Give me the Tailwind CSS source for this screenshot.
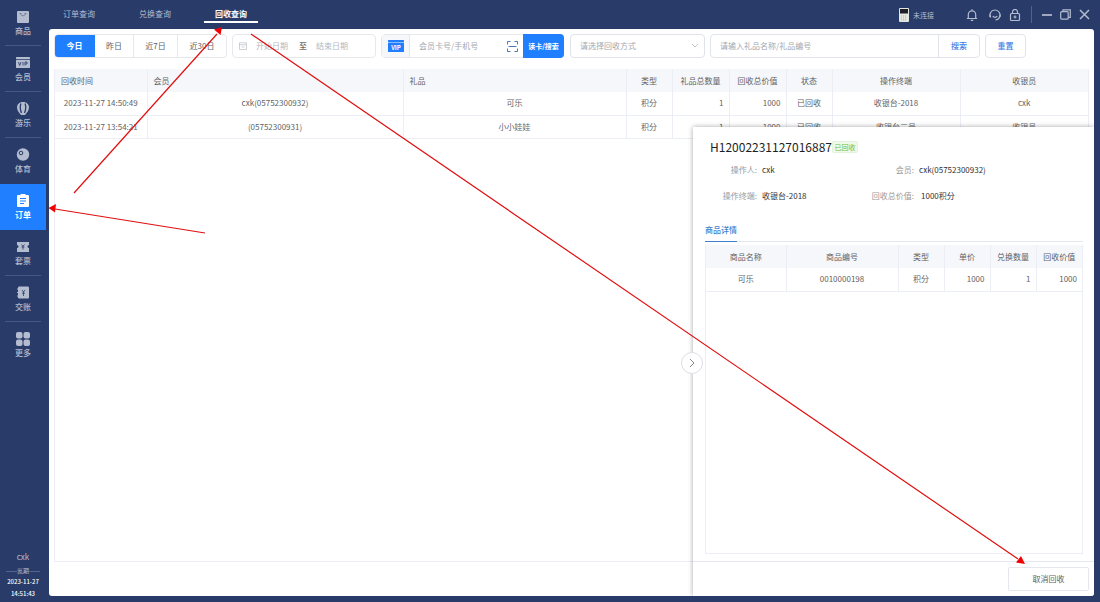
<!DOCTYPE html>
<html lang="zh-CN">
<head>
<meta charset="utf-8">
<meta name="viewport" content="width=device-width, initial-scale=1">
<title>回收查询</title>
<script src="https://cdn.jsdelivr.net/npm/@tailwindcss/browser@4"></script>
</head>
<body class="relative flex h-screen overflow-hidden bg-[#293b68] font-['Noto_Sans_CJK_SC',sans-serif] text-[8px] leading-3 text-[#606266]">

<nav class="flex w-[46px] shrink-0 flex-col text-[#b4bcd0]">
  <a href="#" class="flex h-[46px] flex-col items-center justify-end px-[5px]">
    <svg class="h-[13px] w-[14px]" viewBox="0 0 14 13" fill="currentColor"><rect x="1" y="1" width="12" height="12" rx="1"/><path d="M3.500 3.500h2M8.500 3.500h2M4.500 3.500c0 3 5 3 5 0" stroke="#6b789b" stroke-width=".9" fill="none"/></svg>
    <span class="mt-0.5 font-medium">商品</span><span class="mt-2 h-px w-full bg-[#465782]"></span>
  </a>
  <a href="#" class="flex h-[46px] flex-col items-center justify-end px-[5px]">
    <svg class="h-[13px] w-[14px]" viewBox="0 0 14 13" fill="currentColor"><rect x="0" y="1" width="14" height="2" rx=".5"/><rect x="0" y="3.700" width="14" height="8.300" rx=".5"/><path d="M2.500 6l1.200 3.500L5 6M7 6v3.500M9 9.500V6h2v2H9" stroke="#293b68" stroke-width=".8" fill="none"/></svg>
    <span class="mt-0.5 font-medium">会员</span><span class="mt-2 h-px w-full bg-[#465782]"></span>
  </a>
  <a href="#" class="flex h-[46px] flex-col items-center justify-end px-[5px]">
    <svg class="h-[13px] w-[14px]" viewBox="0 0 14 13" fill="currentColor"><path d="M7 0c4 0 6 2.500 6 5.500C13 8.500 10.500 11 9 13H5C3.500 11 1 8.500 1 5.500 1 2.500 3 0 7 0z"/><path d="M5 1.500C4 4 4.200 8 5.500 11M9 1.500C10 4 9.800 8 8.500 11" stroke="#293b68" stroke-width="1.300" fill="none"/></svg>
    <span class="mt-0.5 font-medium">游乐</span><span class="mt-2 h-px w-full bg-[#465782]"></span>
  </a>
  <a href="#" class="flex h-[46px] flex-col items-center justify-end px-[5px]">
    <svg class="h-[13px] w-[14px]" viewBox="0 0 14 13" fill="currentColor"><circle cx="7" cy="6.500" r="6.200"/><circle cx="5" cy="5" r="1.800" fill="none" stroke="#293b68"/></svg>
    <span class="mt-0.5 font-medium">体育</span><span class="mt-2 h-px w-full"></span>
  </a>
  <a href="#" aria-current="page" class="flex h-[46px] flex-col items-center justify-end bg-[#207fff] px-[5px] text-white">
    <svg class="h-[13px] w-[14px]" viewBox="0 0 14 13" fill="currentColor"><path d="M2 1h2.500V0h5v1H12a1 1 0 0 1 1 1v10a1 1 0 0 1-1 1H2a1 1 0 0 1-1-1V2a1 1 0 0 1 1-1z"/><path d="M4 4.500h6M4 7h6M4 9.500h4" stroke="#207fff" fill="none"/></svg>
    <span class="mt-0.5 font-bold">订单</span><span class="mt-2 h-px w-full"></span>
  </a>
  <a href="#" class="flex h-[46px] flex-col items-center justify-end px-[5px]">
    <svg class="h-[13px] w-[14px]" viewBox="0 0 14 13" fill="currentColor"><path d="M1 2h12v3a1.500 1.500 0 0 0 0 3v4H1V8a1.500 1.500 0 0 0 0-3z"/><path d="M5.500 4.500L7 6.300l1.500-1.800M7 6v3.500M5.500 7h3" stroke="#293b68" stroke-width=".8" fill="none"/></svg>
    <span class="mt-0.5 font-medium">套票</span><span class="mt-2 h-px w-full bg-[#465782]"></span>
  </a>
  <a href="#" class="flex h-[46px] flex-col items-center justify-end px-[5px]">
    <svg class="h-[13px] w-[14px]" viewBox="0 0 14 13" fill="currentColor"><rect x="2" y="0.500" width="11" height="12" rx="1.200"/><path d="M1 3h2M1 6.500h2M1 10h2" stroke="currentColor"/><path d="M6 4l1.500 2L9 4M7.500 6v4M6 7.200h3" stroke="#293b68" stroke-width=".8" fill="none"/></svg>
    <span class="mt-0.5 font-medium">交账</span><span class="mt-2 h-px w-full bg-[#465782]"></span>
  </a>
  <a href="#" class="flex h-[46px] flex-col items-center justify-end px-[5px]">
    <svg class="h-[14px] w-[14px]" viewBox="0 0 14 14" fill="currentColor"><rect width="6.500" height="6.500" rx="2"/><rect x="7.500" width="6.500" height="6.500" rx="2"/><rect y="7.500" width="6.500" height="6.500" rx="2"/><rect x="7.500" y="7.500" width="6.500" height="6.500" rx="2"/></svg>
    <span class="mt-px font-medium">更多</span><span class="mt-2 h-px w-full"></span>
  </a>
  <div class="mt-auto flex flex-col items-center pb-[2px]">
    <span>cxk</span>
    <div class="mt-[3px] flex w-full items-center px-[6px] text-[6px] leading-[10px]"><span class="h-px flex-1 bg-[#53638c]"></span><span>氪期</span><span class="h-px flex-1 bg-[#53638c]"></span></div>
    <time class="text-center text-[6px] leading-3 font-medium text-white">2023-11-27<br>14:51:43</time>
  </div>
</nav>

<div class="flex min-w-0 flex-1 flex-col pr-[6px] pb-[6px] pl-[3px]">
  <header class="flex h-[29px] shrink-0 items-center text-[#b4bcd0]">
    <div class="flex h-full pl-[14px]">
      <a href="#" class="mr-11 pt-2">订单查询</a>
      <a href="#" class="mr-[33px] pt-2">兑换查询</a>
      <a href="#" class="flex w-[54px] flex-col items-center pt-2 font-bold text-white">回收查询<span class="mt-px h-0.5 w-full bg-white"></span></a>
    </div>
    <div class="ml-auto flex items-center pr-1">
      <svg class="h-[14px] w-[10px]" viewBox="0 0 10 14"><rect width="10" height="14" rx="1" fill="#e4e6e0"/><rect x="1" y="1" width="8" height="4.500" fill="#1c1f26"/><path d="M2 8h6M2 10h6M2 12h6" stroke="#b5b7b2" stroke-dasharray="1 1"/></svg>
      <span class="mr-[32px] ml-1 text-[7px]">未连接</span>
      <button aria-label="通知" class="mr-[11px]"><svg class="size-3" viewBox="0 0 12 12" fill="none" stroke="currentColor" stroke-width="1.200"><path d="M.8 9.500h10.400M2.300 9.500V5.500a3.700 3.700 0 0 1 7.400 0v4M4.800 11.300h2.400M6 .3v1.500"/></svg></button>
      <button aria-label="客服" class="mr-2"><svg class="size-3" viewBox="0 0 12 12" fill="none" stroke="currentColor" stroke-width="1.200"><path d="M1.700 8.500A5 5 0 1 1 10.500 8.200C9.700 10 8.500 10.800 6.500 10.800M3.800 7c1 1.700 3.400 1.700 4.400 0"/><path d="M1 5.500v2.500M11 5.500v2.500"/></svg></button>
      <button aria-label="锁定" class="mr-[10px]"><svg class="size-3" viewBox="0 0 12 12" fill="none" stroke="currentColor" stroke-width="1.200"><rect x="1.500" y="4.500" width="9" height="7" rx="1"/><path d="M3.500 4.500V3a2.500 2.500 0 0 1 5 0v1.500M6 6.500v3M4.500 8h3"/></svg></button>
      <span class="mr-[10px] h-[17px] w-px bg-[#53638c]"></span>
      <button aria-label="最小化" class="mr-2"><svg class="h-3 w-[10px]" viewBox="0 0 10 12"><path d="M0 6h10" stroke="currentColor" stroke-width="1.700"/></svg></button>
      <button aria-label="还原" class="mr-2"><svg class="size-[11px]" viewBox="0 0 11 11" fill="none" stroke="currentColor" stroke-width="1.200"><rect x=".7" y="2.700" width="7.500" height="7.500" rx="1"/><path d="M3 2.500V.8h7.300v7.500H8"/></svg></button>
      <button aria-label="关闭"><svg class="size-[11px]" viewBox="0 0 11 11" stroke="currentColor" stroke-width="1.500"><path d="M1 1l9 9M10 1l-9 9"/></svg></button>
    </div>
  </header>

  <main class="relative flex min-h-0 flex-1 flex-col overflow-hidden rounded-[3px] bg-white px-[5px] pt-[5px]">
    <form class="flex h-[24px] shrink-0">
      <div class="mr-[5px] flex overflow-hidden rounded-sm border border-[#e6e8ec]">
        <button type="button" class="-my-px -ml-px w-[41px] bg-[#207fff] font-bold text-white">今日</button>
        <button type="button" class="w-[39px] border-r border-[#e6e8ec]">昨日</button>
        <button type="button" class="w-[44px] border-r border-[#e6e8ec]">近7日</button>
        <button type="button" class="w-[48px]">近30日</button>
      </div>
      <div class="mr-[5px] flex w-[144px] items-center rounded-sm border border-[#e6e8ec] pl-[6px]">
        <svg class="mr-[9px] size-[8px] shrink-0 text-[#c0c4cc]" viewBox="0 0 8 8" fill="none" stroke="currentColor" stroke-width=".8"><path d="M.5 7.500V.8h7v6.700zM.5 2.800h7M2.500 5h3"/></svg>
        <input aria-label="开始日期" placeholder="开始日期" class="w-[36px] outline-none placeholder:text-[#b4b8c0]">
        <span class="mx-[7px] text-[#303133]">至</span>
        <input aria-label="结束日期" placeholder="结束日期" class="w-[48px] pl-[2px] outline-none placeholder:text-[#b4b8c0]">
      </div>
      <div class="mr-[6px] flex w-[183px] rounded-sm border border-[#e6e8ec]">
        <span class="flex w-[28px] items-center justify-center border-r border-[#e6e8ec] bg-[#f5f7fa]"><svg class="h-3 w-4" viewBox="0 0 16 12"><rect width="16" height="2" rx=".5" fill="#207fff"/><rect y="2.500" width="16" height="9.500" rx=".5" fill="#207fff"/><text x="8" y="9.500" text-anchor="middle" font-size="6" font-weight="700" fill="#fff">VIP</text></svg></span>
        <input aria-label="会员卡号/手机号" placeholder="会员卡号/手机号" class="min-w-0 flex-1 pl-[9px] outline-none placeholder:text-[#a4a8b0]">
        <svg class="mr-[5px] size-[11px] self-center" viewBox="0 0 11 11" fill="none" stroke="#4f78b8"><path d="M.5 3.500v-3h3M7.500.5h3v3M10.500 7.500v3h-3M3.500 10.500h-3v-3M1.500 5.500h8"/></svg>
        <button type="button" class="-my-px -mr-px w-[41px] rounded-r-sm bg-[#207fff] text-[7px] font-bold text-white">读卡/搜索</button>
      </div>
      <div class="relative mr-[5px] w-[135px]">
        <select aria-label="回收方式" class="h-full w-full appearance-none rounded-sm border border-[#e0e3e9] bg-white pl-[9px] text-[#a4a8b0]"><option>请选择回收方式</option></select>
        <svg class="pointer-events-none absolute top-[9px] right-[6px] h-[6px] w-[8px]" viewBox="0 0 8 6" fill="none" stroke="#c0c4cc"><path d="M1 1l3 3 3-3"/></svg>
      </div>
      <div class="mr-[5px] flex w-[270px] rounded-sm border border-[#e0e3e9]">
        <input aria-label="礼品名称" placeholder="请输入礼品名称/礼品编号" class="min-w-0 flex-1 pl-[9px] outline-none placeholder:text-[#a4a8b0]">
        <button type="button" class="w-[41px] border-l border-[#e0e3e9] font-medium text-[#3f7fe8]">搜索</button>
      </div>
      <button type="reset" class="w-[41px] rounded-sm border border-[#e0e3e9] font-medium text-[#3f7fe8]">重置</button>
    </form>

    <section class="mt-[11px] mb-[34px] min-h-0 flex-1 border-b border-l border-[#ebeef5]">
      <table class="w-full table-fixed border-collapse text-center">
        <colgroup><col class="w-[92px]"><col class="w-[256px]"><col class="w-[223px]"><col class="w-[46px]"><col class="w-[57px]"><col class="w-[57px]"><col class="w-[46px]"><col class="w-[128px]"><col></colgroup>
        <thead class="bg-[#f5f7fa]">
          <tr class="h-[23px] *:border-r *:border-[#ebeef5] *:font-normal">
            <th class="pl-[6px] text-left">回收时间</th><th class="pl-[6px] text-left">会员</th><th class="pl-[6px] text-left">礼品</th><th>类型</th><th>礼品总数量</th><th>回收总价值</th><th>状态</th><th>操作终端</th><th>收银员</th>
          </tr>
        </thead>
        <tbody>
          <tr class="h-[23px] *:border-r *:border-b *:border-[#ebeef5]"><td>2023-11-27 14:50:49</td><td>cxk(05752300932)</td><td>可乐</td><td>积分</td><td class="pr-[5px] text-right">1</td><td class="pr-[5px] text-right">1000</td><td>已回收</td><td>收银台-2018</td><td>cxk</td></tr>
          <tr class="h-[23px] *:border-r *:border-b *:border-[#ebeef5]"><td>2023-11-27 13:54:21</td><td>(05752300931)</td><td>小小娃娃</td><td>积分</td><td class="pr-[5px] text-right">1</td><td class="pr-[5px] text-right">1000</td><td>已回收</td><td>收银台三号</td><td>收银员</td></tr>
        </tbody>
      </table>
    </section>

    <aside class="absolute top-[98px] right-0 bottom-0 flex w-[401px] flex-col bg-white shadow-[0_0_5px_rgba(0,0,0,0.35)]">
      <button aria-label="收起" class="absolute top-[225px] -left-[12px] flex size-[22px] items-center justify-center rounded-full border border-[#dcdfe6] bg-white"><svg class="h-[10px] w-[6px]" viewBox="0 0 6 10" fill="none" stroke="#888"><path d="M1 1l4 4-4 4"/></svg></button>
      <div class="flex min-h-0 flex-1 flex-col pr-[11px] pb-[7px] pl-3">
        <div class="flex items-center pt-3 pl-[5px]">
          <h1 class="text-[12px] leading-4 text-[#1d1f23]">H12002231127016887</h1>
          <span class="w-[26px] rounded-xs border border-[#e1f3d8] bg-[#f0f9eb] text-center text-[7px] leading-[10px] text-[#67c23a]">已回收</span>
        </div>
        <dl class="mt-[9px] grid grid-cols-[52px_95px_52px_1fr] gap-x-[5px] gap-y-[14px] text-[#303133]">
          <dt class="text-right text-[#999]">操作人:</dt><dd>cxk</dd><dt class="text-right text-[#999]">会员:</dt><dd>cxk(05752300932)</dd>
          <dt class="text-right text-[#999]">操作终端:</dt><dd>收银台-2018</dd><dt class="text-right text-[#999]">回收总价值:</dt><dd class="pl-[2px]">1000积分</dd>
        </dl>
        <div class="mt-[22px] flex border-b border-[#e4e7ed]"><button class="-mb-px border-b border-[#3f7fd0] pb-[5px] font-medium text-[#3f7fd0]">商品详情</button></div>
        <div class="mt-[3px] min-h-0 flex-1 border-x border-b border-[#ebeef5]">
          <table class="w-full table-fixed border-collapse text-center">
            <colgroup><col class="w-[80px]"><col><col class="w-[46px]"><col class="w-[46px]"><col class="w-[46px]"><col class="w-[46px]"></colgroup>
            <thead class="bg-[#f5f7fa]"><tr class="h-[23px] *:border-r *:border-[#ebeef5] *:font-normal *:last:border-r-0"><th>商品名称</th><th>商品编号</th><th>类型</th><th>单价</th><th>兑换数量</th><th>回收价值</th></tr></thead>
            <tbody><tr class="h-[23px] *:border-r *:border-b *:border-[#ebeef5] *:last:border-r-0"><td>可乐</td><td>0010000198</td><td>积分</td><td class="pr-[5px] text-right">1000</td><td class="pr-[5px] text-right">1</td><td class="pr-[5px] text-right">1000</td></tr></tbody>
          </table>
        </div>
      </div>
      <footer class="flex h-[35px] shrink-0 items-center justify-end border-t border-[#e4e7ed] pr-[5px]"><button class="h-[24px] w-[81px] rounded-xs border border-[#e4e7ed]">取消回收</button></footer>
    </aside>
  </main>
</div>

<svg class="pointer-events-none absolute top-0 left-0 h-[602px] w-[1100px]" viewBox="0 0 1100 602" stroke="#e01010" stroke-width="1.200" fill="#f00000" aria-hidden="true">
  <path d="M74 193L217 34M205 233L55 209M251 34L1018 559" fill="none"/>
  <path d="M222 27l-1.500 8-6.500-5.500zM48.500 208l7.500-4-1 8.500zM1025 564l-9-1.500 5-6.500z" stroke="none"/>
</svg>
</body>
</html>
